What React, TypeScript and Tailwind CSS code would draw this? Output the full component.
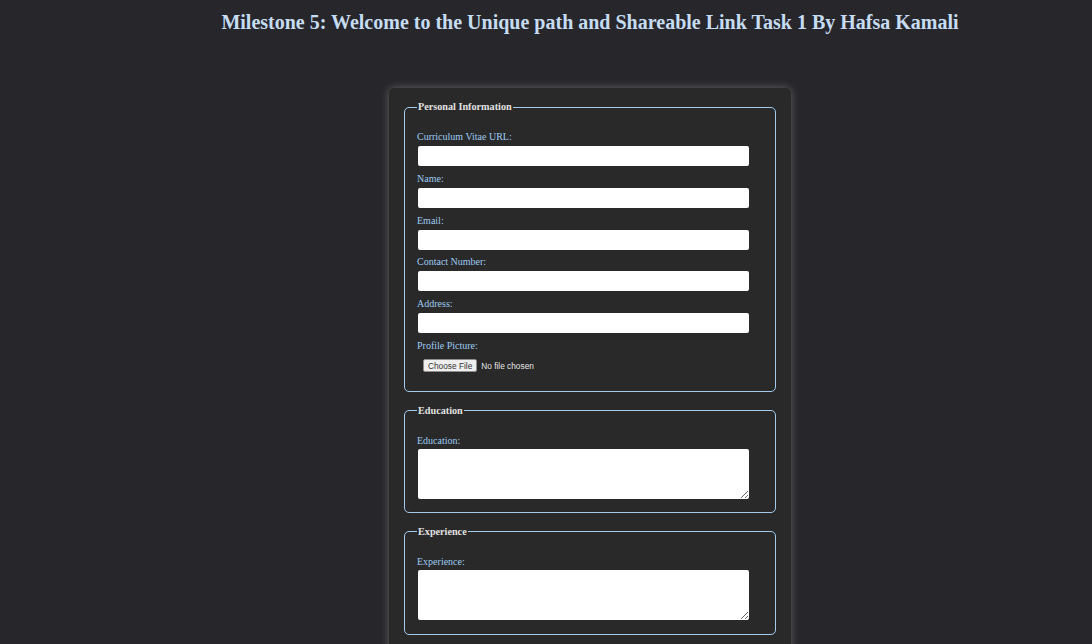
import React from "react";

const Field = ({ label, type = "text" }: { label: string; type?: string }) => {
  return (
    <div className="mb-[6.75px]">
      <label className="block leading-[12px] mb-[3px] text-[10px] text-[#9ecbf2]">
        {label}
      </label>
      <input
        type={type}
        className="block w-[331px] h-[20px] ml-px bg-white rounded-[2px] text-black text-[10px] px-1"
      />
    </div>
  );
};

const Section = ({
  title,
  children,
  className = "",
}: {
  title: string;
  children: React.ReactNode;
  className?: string;
}) => {
  return (
    <fieldset
      className={
        "border border-[#a4cbee] rounded-[5px] pl-[12px] pr-[12px] pt-[18px] " +
        className
      }
    >
      <legend className="text-[10.2px] font-bold leading-[12px] text-[#e2e2e2] px-px">
        {title}
      </legend>
      {children}
    </fieldset>
  );
};

const TextArea = ({ label }: { label: string }) => {
  return (
    <div>
      <label className="block leading-[12px] mb-[2px] text-[10px] text-[#9ecbf2]">
        {label}
      </label>
      <textarea className="block w-[331px] h-[50px] ml-px bg-white rounded-[2px] text-black text-[10px] p-1" />
    </div>
  );
};

export default function App() {
  return (
    <div
      className="min-h-screen bg-[#27272b] pl-[88px]"
      style={{ fontFamily: '"Liberation Serif", "Times New Roman", serif' }}
    >
      <h1 className="text-center text-[20px] font-bold leading-[24px] pt-[10px] text-[#c6dcf2]">
        Milestone 5: Welcome to the Unique path and Shareable Link Task 1 By Hafsa Kamali
      </h1>

      <div className="mx-auto mt-[54px] w-[402px] bg-[#292929] rounded-[5px] shadow-[0_0_8px_rgba(255,255,255,0.28)] px-[15px] pt-[13px] pb-[20px] flex flex-col gap-[13px]">
        <Section title="Personal Information" className="pb-[4px]">
          <Field label="Curriculum Vitae URL:" type="url" />
          <Field label="Name:" />
          <Field label="Email:" type="email" />
          <Field label="Contact Number:" type="tel" />
          <Field label="Address:" />
          <div className="mb-[15px]">
            <label className="block leading-[12px] mb-[3px] text-[10px] text-[#9ecbf2]">
              Profile Picture:
            </label>
            <input
              type="file"
              className="block ml-[6px] mt-[7px] text-[8.3px] leading-[12px] text-[#e6e6e6] file:mr-[4px] file:h-[13px] file:px-[4px] file:bg-[#efefef] file:border file:border-[#8f8f8f] file:rounded-[2px] file:text-[#333] file:text-[8.3px]"
              style={{ fontFamily: '"Liberation Sans", Arial, sans-serif' }}
            />
          </div>
        </Section>

        <Section title="Education" className="pb-[13px]">
          <TextArea label="Education:" />
        </Section>

        <Section title="Experience" className="pb-[14px]">
          <TextArea label="Experience:" />
        </Section>
      </div>
    </div>
  );
}
